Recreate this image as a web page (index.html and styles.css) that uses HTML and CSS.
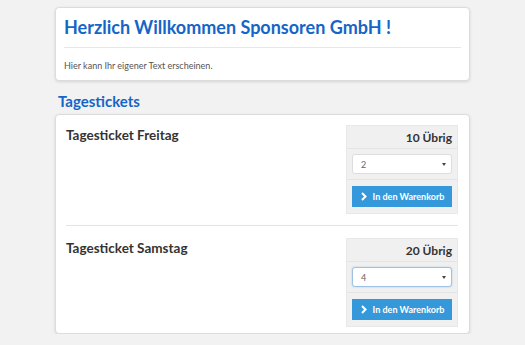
FILE: index.html
```html
<!DOCTYPE html>
<html lang="de">

<head>
    <meta charset="UTF-8">
    <meta name="viewport" content="width=device-width, initial-scale=1.0">
    <title>Tickets</title>
    <link rel="stylesheet" href="styles.css">
</head>

<body>
    <div class="page">
        <div class="card welcome">
            <h1>Herzlich Willkommen Sponsoren GmbH !</h1>
            <div class="rule"></div>
            <p>Hier kann Ihr eigener Text erscheinen.</p>
        </div>

        <h2 class="section-title">Tagestickets</h2>

        <div class="card tickets">
            <div class="ticket">
                <h3>Tagesticket Freitag</h3>
                <div class="order-box">
                    <div class="stock">10 Übrig</div>
                    <div class="qty">
                        <div class="select">2<span class="caret"></span></div>
                    </div>
                    <div class="action">
                        <button class="cart-btn">
                            <svg width="8" height="9" viewBox="0 0 8 9"><path d="M2 1 L5.5 4.5 L2 8" fill="none" stroke="#fff" stroke-width="2"/></svg>
                            In den Warenkorb
                        </button>
                    </div>
                </div>
            </div>
            <div class="ticket">
                <h3>Tagesticket Samstag</h3>
                <div class="order-box">
                    <div class="stock">20 Übrig</div>
                    <div class="qty">
                        <div class="select focus">4<span class="caret"></span></div>
                    </div>
                    <div class="action">
                        <button class="cart-btn">
                            <svg width="8" height="9" viewBox="0 0 8 9"><path d="M2 1 L5.5 4.5 L2 8" fill="none" stroke="#fff" stroke-width="2"/></svg>
                            In den Warenkorb
                        </button>
                    </div>
                </div>
            </div>
        </div>
    </div>
</body>

</html>
```

FILE: styles.css
```css
body {
    font-family: Lato, "Open Sans", sans-serif;
    background-color: #f2f2f2;
    margin: 0;
    padding: 0;
    color: #333;
}

.page {
    width: 415px;
    margin: 0 auto;
    padding-top: 7px;
}

.card {
    background-color: #fff;
    border: 1px solid #dcdcdc;
    border-radius: 4px;
    box-shadow: 0 1px 3px rgba(0, 0, 0, 0.12);
}

.welcome {
    height: 72px;
    padding: 0 8px;
}

.welcome h1 {
    margin: 8px 0 0;
    font-size: 18px;
    line-height: 22px;
    color: #1565c8;
}

.rule {
    height: 1px;
    background-color: #e8e8e8;
    margin-top: 9px;
}

.welcome p {
    margin: 12px 0 0;
    font-size: 9px;
    line-height: 12px;
    color: #555;
}

.section-title {
    margin: 11px 0 0 3px;
    font-size: 15px;
    line-height: 18px;
    color: #1565c8;
}

.tickets {
    margin-top: 4px;
    height: 218px;
    padding: 0 11px 0 10px;
}

.ticket {
    display: flex;
    justify-content: space-between;
    align-items: flex-start;
    padding: 10px 0 11px;
}

.ticket + .ticket {
    border-top: 1px solid #e4e4e4;
    padding-top: 12px;
}

.ticket h3 {
    margin: 2px 0 0;
    font-size: 13.5px;
    line-height: 16px;
    color: #333;
}

.order-box {
    width: 110px;
    background-color: #f0f0f0;
    border: 1px solid #e8e8e8;
}

.stock {
    height: 22px;
    line-height: 24px;
    text-align: right;
    padding-right: 5px;
    font-size: 12px;
    font-weight: bold;
    border-bottom: 1px solid #e4e4e4;
}

.qty {
    padding: 5px 5px;
    border-bottom: 1px solid #e4e4e4;
}

.select {
    position: relative;
    height: 18px;
    line-height: 19px;
    background-color: #fff;
    border: 1px solid #ddd;
    border-radius: 3px;
    padding-left: 8px;
    font-size: 9px;
    color: #666;
}

.select.focus {
    border-color: #9cc3e6;
    box-shadow: 0 0 2px rgba(52, 152, 219, 0.4);
}

.caret {
    position: absolute;
    right: 5px;
    top: 8px;
    border-left: 2px solid transparent;
    border-right: 2px solid transparent;
    border-top: 3px solid #444;
}

.action {
    padding: 6px 5px 6px;
}

.cart-btn {
    display: flex;
    align-items: center;
    justify-content: center;
    gap: 5px;
    width: 100%;
    height: 21px;
    padding: 0;
    border: none;
    background-color: #3498db;
    color: #fff;
    font-family: inherit;
    font-size: 9px;
    font-weight: bold;
}
```
